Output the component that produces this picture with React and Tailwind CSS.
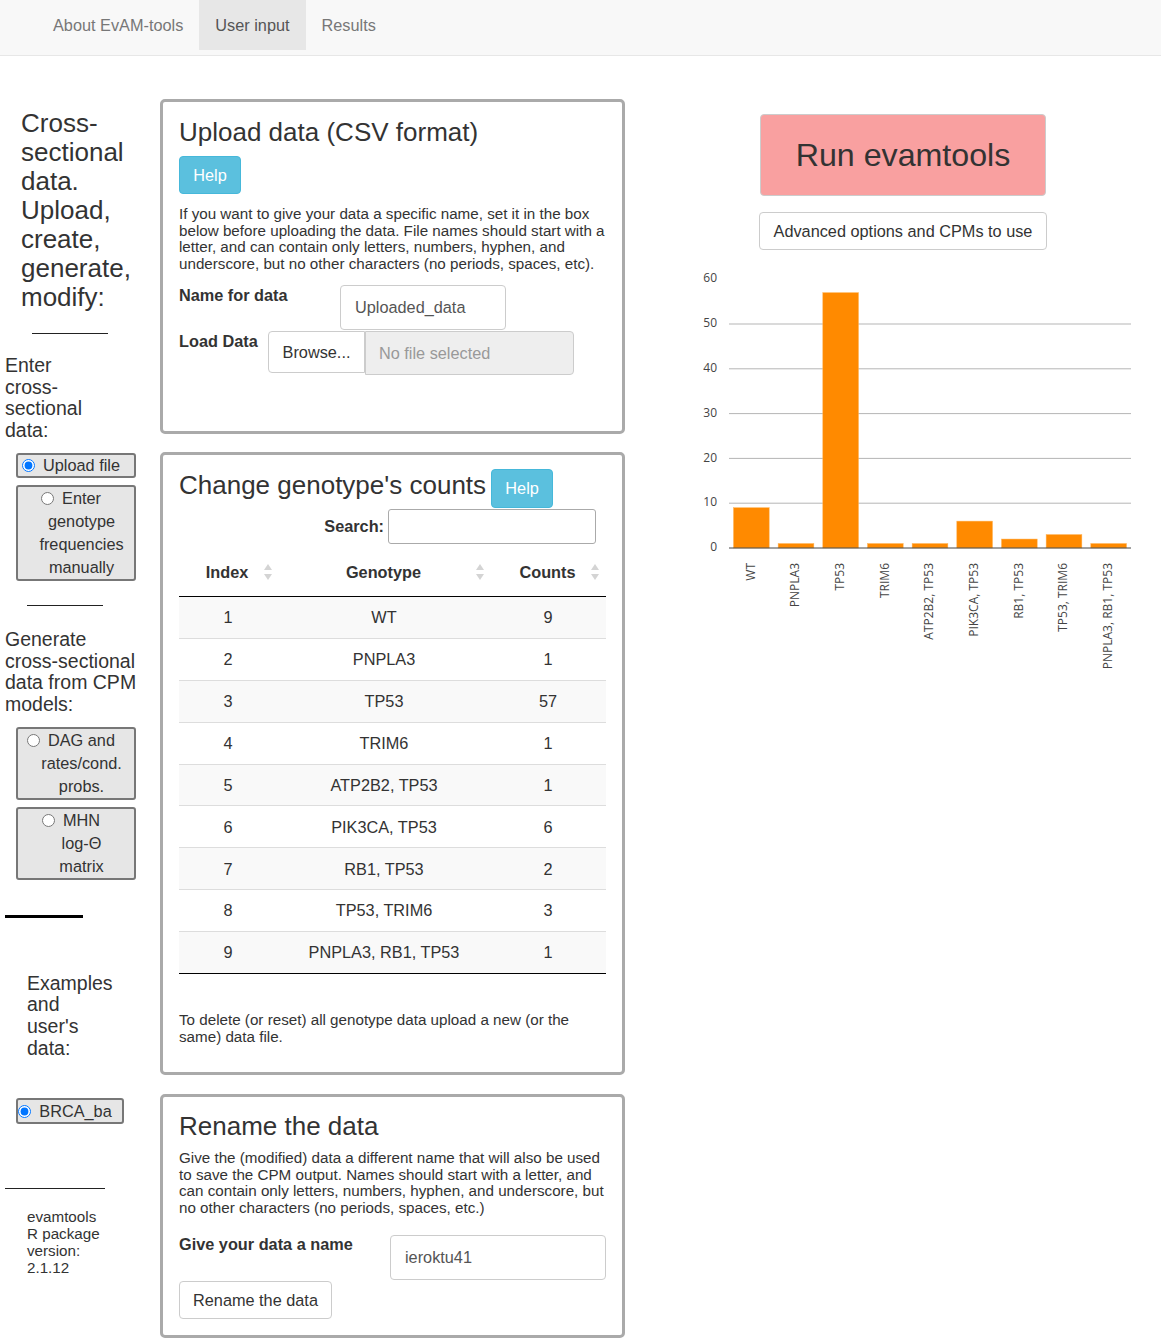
import React from 'react';

const rows = [
  [1, 'WT', 9],
  [2, 'PNPLA3', 1],
  [3, 'TP53', 57],
  [4, 'TRIM6', 1],
  [5, 'ATP2B2, TP53', 1],
  [6, 'PIK3CA, TP53', 6],
  [7, 'RB1, TP53', 2],
  [8, 'TP53, TRIM6', 3],
  [9, 'PNPLA3, RB1, TP53', 1],
];

// radio sits left of the centred label, taking no width of its own
function Radio({ checked }) {
  return (
    <input
      type="radio"
      checked={checked}
      readOnly
      className="w-[13px] h-[13px] m-0 ml-[-21px] mr-[8px] align-[-1px]"
    />
  );
}

function SortIcon() {
  return (
    <svg width="10" height="18" viewBox="0 0 10 18" className="shrink-0">
      <path d="M5 1 L9 7 L1 7 Z" fill="#d4d4d4" />
      <path d="M5 17 L9 11 L1 11 Z" fill="#d4d4d4" />
    </svg>
  );
}

function Chart() {
  const x0 = 84;
  const x1 = 486;
  const y0 = 281;
  const k = 4.48;
  const band = (x1 - x0) / rows.length;
  return (
    <svg width="516" height="420" viewBox="0 0 516 420">
      {[10, 20, 30, 40, 50].map((v) => (
        <line key={v} x1={x0} x2={x1} y1={y0 - v * k} y2={y0 - v * k} stroke="#b5b5b5" strokeWidth="1" />
      ))}
      {[0, 10, 20, 30, 40, 50, 60].map((v) => (
        <text
          key={v}
          x="72"
          y={y0 - v * k}
          textAnchor="end"
          dominantBaseline="middle"
          fontFamily="'Open Sans', sans-serif"
          fontSize="12"
          fill="#444"
        >
          {v}
        </text>
      ))}
      {rows.map(([i, g, c], idx) => {
        const bx = x0 + idx * band + band * 0.1;
        const bw = band * 0.8;
        const cx = x0 + idx * band + band / 2;
        return (
          <g key={i}>
            <rect x={bx} y={y0 - c * k} width={bw} height={c * k} fill="#ff8a00" stroke="#ffb55a" strokeWidth="0.5" />
            <text
              transform={`translate(${cx},296) rotate(-90)`}
              textAnchor="end"
              dominantBaseline="middle"
              fontFamily="'Open Sans', sans-serif"
              fontSize="12"
              fill="#444"
            >
              {g}
            </text>
          </g>
        );
      })}
      <line x1={x0} x2={x1} y1={y0} y2={y0} stroke="#444" strokeWidth="1" />
    </svg>
  );
}

function Sidebar() {
  return (
    <div className="w-[160px] shrink-0 text-[#333]">
      <div className="pl-[21px] pt-[53px] text-[26px] leading-[29px]">
        Cross-<br />sectional<br />data.<br />Upload,<br />create,<br />generate,<br />modify:
      </div>
      <div className="ml-[32px] mt-[21px] w-[76px] h-px bg-[#222]" />
      <div className="pl-[5px] mt-[21px] text-[19.5px] leading-[21.7px]">
        Enter<br />cross-<br />sectional<br />data:
      </div>
      <div className="ml-[16px] mt-[11px] w-[120px] h-[25px] border-2 border-[#777] rounded-[3px] bg-[#e6e6e6] pl-[11px] text-center text-[16.3px] leading-[21px]">
        <Radio checked />Upload file
      </div>
      <div className="ml-[16px] mt-[7px] w-[120px] h-[96px] border-2 border-[#777] rounded-[3px] bg-[#e6e6e6] pl-[11px] text-center text-[16.3px] leading-[23px]">
        <Radio />Enter<br />genotype<br />frequencies<br />manually
      </div>
      <div className="ml-[27px] mt-[24px] w-[76px] h-px bg-[#222]" />
      <div className="pl-[5px] mt-[23px] text-[19.5px] leading-[21.7px]">
        Generate<br />cross-sectional<br />data from CPM<br />models:
      </div>
      <div className="ml-[16px] mt-[11px] w-[120px] h-[73px] border-2 border-[#777] rounded-[3px] bg-[#e6e6e6] pl-[11px] text-center text-[16.3px] leading-[23px]">
        <Radio />DAG and<br />rates/cond.<br />probs.
      </div>
      <div className="ml-[16px] mt-[7px] w-[120px] h-[73px] border-2 border-[#777] rounded-[3px] bg-[#e6e6e6] pl-[11px] text-center text-[16.3px] leading-[23px]">
        <Radio />MHN<br />log-Θ<br />matrix
      </div>
      <div className="ml-[5px] mt-[35px] w-[78px] h-[3px] bg-black" />
      <div className="pl-[27px] mt-[55px] text-[19.5px] leading-[21.7px]">
        Examples<br />and<br />user's<br />data:
      </div>
      <div className="ml-[16px] mt-[39px] w-[108px] h-[26px] border-2 border-[#777] rounded-[3px] bg-[#e6e6e6] pl-[11px] text-center text-[16.3px] leading-[22px]">
        <Radio checked />BRCA_ba
      </div>
      <div className="ml-[5px] mt-[64px] w-[100px] h-px bg-[#222]" />
      <div className="pl-[27px] mt-[20px] text-[15.2px] leading-[16.7px]">
        evamtools<br />R package<br />version:<br />2.1.12
      </div>
    </div>
  );
}

function HelpButton({ className }) {
  return (
    <div className={`w-[62px] h-[38px] flex items-center justify-center rounded-[4px] bg-[#5bc0de] border border-[#46b8da] text-white text-[16.3px] ${className || ''}`}>
      Help
    </div>
  );
}

function MainColumn() {
  return (
    <div className="w-[465px] shrink-0 pt-[43px] text-[#333]">
      {/* upload panel */}
      <div className="h-[335px] border-[3px] border-[#aaa] rounded-[5px] px-[16px] pt-[16px]">
        <h2 className="text-[26px] leading-[29px]">Upload data (CSV format)</h2>
        <HelpButton className="mt-[9px]" />
        <p className="mt-[12px] text-[15.2px] leading-[16.7px]">
          If you want to give your data a specific name, set it in the box below before uploading the data. File names should start with a letter, and can contain only letters, numbers, hyphen, and underscore, but no other characters (no periods, spaces, etc).
        </p>
        <div className="mt-[12px] flex items-start">
          <div className="w-[161px] pt-[1px] font-bold text-[16.3px] leading-[19px]">Name for data</div>
          <div className="w-[166px] h-[45px] border border-[#ccc] rounded-[4px] pl-[14px] flex items-center text-[16.3px] text-[#555]">
            Uploaded_data
          </div>
        </div>
        <div className="mt-[1px] flex items-start">
          <div className="w-[89px] pt-[1px] font-bold text-[16.3px] leading-[19px]">Load Data</div>
          <div className="w-[97px] h-[42px] border border-[#ccc] rounded-l-[4px] bg-white flex items-center justify-center text-[16.3px]">
            Browse...
          </div>
          <div className="w-[209px] h-[44px] border border-[#ccc] rounded-r-[4px] bg-[#eee] pl-[13px] flex items-center text-[16.3px] text-[#999]">
            No file selected
          </div>
        </div>
      </div>

      {/* genotype counts panel */}
      <div className="mt-[18px] h-[623px] border-[3px] border-[#aaa] rounded-[5px] px-[16px] pt-[14px]">
        <div className="flex items-start">
          <h2 className="mt-[2px] text-[26px] leading-[29px]">Change genotype's counts</h2>
          <HelpButton className="ml-[5px] h-[39px]" />
        </div>
        <div className="mt-[1px] flex items-center justify-end pr-[10px]">
          <span className="font-bold text-[16.3px]">Search:</span>
          <div className="ml-[4px] w-[208px] h-[35px] border border-[#aaa] rounded-[3px]" />
        </div>
        <div className="mt-[1px] grid grid-cols-[101px_215px_111px] h-[52px] pt-[3px] border-b border-black font-bold text-[16.3px]">
          <div className="flex items-center pl-[12px] pr-[7px]">
            <span className="flex-1 text-center">Index</span>
            <SortIcon />
          </div>
          <div className="flex items-center pl-[12px] pr-[10px]">
            <span className="flex-1 text-center">Genotype</span>
            <SortIcon />
          </div>
          <div className="flex items-center pl-[10px] pr-[6px]">
            <span className="flex-1 text-center">Counts</span>
            <SortIcon />
          </div>
        </div>
        {rows.map(([i, g, c], idx) => (
          <div
            key={i}
            className={`grid grid-cols-[101px_215px_111px] h-[41.9px] items-center text-[16.3px] border-b ${idx === rows.length - 1 ? 'border-black' : 'border-[#ddd]'} ${idx % 2 === 0 ? 'bg-[#f9f9f9]' : 'bg-white'}`}
          >
            <div className="text-center pr-[3px]">{i}</div>
            <div className="text-center pr-[7px]">{g}</div>
            <div className="text-center pr-[5px]">{c}</div>
          </div>
        ))}
        <p className="mt-[38px] text-[15.2px] leading-[16.7px]">
          To delete (or reset) all genotype data upload a new (or the same) data file.
        </p>
      </div>

      {/* rename panel */}
      <div className="mt-[19px] h-[244px] border-[3px] border-[#aaa] rounded-[5px] px-[16px] pt-[15px]">
        <h2 className="text-[26px] leading-[29px]">Rename the data</h2>
        <p className="mt-[9px] text-[15.2px] leading-[16.7px]">
          Give the (modified) data a different name that will also be used to save the CPM output. Names should start with a letter, and can contain only letters, numbers, hyphen, and underscore, but no other characters (no periods, spaces, etc.)
        </p>
        <div className="mt-[18px] flex items-start">
          <div className="w-[211px] font-bold text-[16.3px] leading-[19px]">Give your data a name</div>
          <div className="w-[216px] h-[45px] border border-[#ccc] rounded-[4px] pl-[14px] flex items-center text-[16.3px] text-[#555]">
            ieroktu41
          </div>
        </div>
        <div className="mt-[1px] w-[153px] h-[38px] border border-[#ccc] rounded-[4px] flex items-center justify-center text-[16.3px]">
          Rename the data
        </div>
      </div>
    </div>
  );
}

function RightColumn() {
  return (
    <div className="ml-[20px] w-[516px] shrink-0 pt-[58px] flex flex-col items-center text-[#333]">
      <div className="w-[286px] h-[82px] rounded-[4px] border border-[#ccc] bg-[#f9a0a0] flex items-center justify-center text-[32.2px]">
        Run evamtools
      </div>
      <div className="mt-[16px] w-[288px] h-[38px] rounded-[4px] border border-[#ccc] bg-white flex items-center justify-center text-[16.3px]">
        Advanced options and CPMs to use
      </div>
      <div className="mt-[17px] self-start">
        <Chart />
      </div>
    </div>
  );
}

export default function App() {
  return (
    <div className="w-[1161px] min-h-[1342px] bg-white font-['Liberation_Sans',Arial,sans-serif]">
      <div className="h-[56px] bg-[#f8f8f8] border-b border-[#e7e7e7]">
        <ul className="flex h-[50px] pl-[37px] text-[16.3px]">
          <li className="px-[16px] pt-[1px] flex items-center text-[#777]">About EvAM-tools</li>
          <li className="px-[16px] pt-[1px] flex items-center text-[#555] bg-[#e7e7e7]">User input</li>
          <li className="px-[16px] pt-[1px] flex items-center text-[#777]">Results</li>
        </ul>
      </div>
      <div className="flex">
        <Sidebar />
        <MainColumn />
        <RightColumn />
      </div>
    </div>
  );
}
